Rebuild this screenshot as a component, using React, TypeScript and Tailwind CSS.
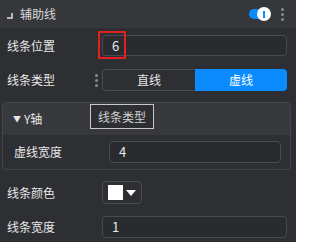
import React from "react";

const font = { fontFamily: '"Noto Sans CJK SC", "Noto Sans", sans-serif' };

function Dots() {
  return (
    <div className="flex flex-col items-center gap-[2px]">
      <span className="h-[3px] w-[3px] rounded-full bg-[#8a8b90]" />
      <span className="h-[3px] w-[3px] rounded-full bg-[#8a8b90]" />
      <span className="h-[3px] w-[3px] rounded-full bg-[#8a8b90]" />
    </div>
  );
}

export default function App() {
  return (
    <div
      className="w-[296px] h-[242px] overflow-hidden bg-[#2e2f33] text-[12px] text-[#e8e8e8]"
      style={font}
    >
      {/* header */}
      <div className="flex h-[28px] items-center bg-[#36373b] pl-[7px] pr-[12px]">
        <span className="mr-[7px] mt-[4px] h-[6px] w-[6px] border-b-2 border-r-2 border-[#b8b8b8]" />
        <span className="text-[#d8d8d8]">辅助线</span>
        <div className="ml-auto flex items-center gap-[12px]">
          <div className="relative h-[10px] w-[20px] rounded-full bg-[#0a8cff]">
            <div className="absolute right-[-2px] top-[-2px] flex h-[14px] w-[14px] items-center justify-center rounded-full bg-white">
              <span className="h-[7px] w-[2px] bg-[#0a8cff]" />
            </div>
          </div>
          <Dots />
        </div>
      </div>

      <div className="flex flex-col pl-[7px] pr-[9px]">
        {/* 线条位置 */}
        <div className="mt-[7px] flex h-[21px] items-center">
          <span className="w-[95px]">线条位置</span>
          <div className="relative flex h-[21px] flex-1 items-center rounded-[4px] border border-[#4a4b50] bg-[#2a2b2f] pl-[9px] text-[13px]">
            6
            <div className="absolute left-[-5px] top-[-5px] h-[28px] w-[28px] border-2 border-[#e3201e]" />
          </div>
        </div>

        {/* 线条类型 */}
        <div className="mt-[13px] flex h-[22px] items-center">
          <span className="w-[84px]">线条类型</span>
          <div className="w-[11px]">
            <Dots />
          </div>
          <div className="flex h-[22px] flex-1">
            <div className="flex flex-1 items-center justify-center rounded-l-[4px] border border-r-0 border-[#4a4b50]">
              直线
            </div>
            <div className="flex flex-1 items-center justify-center rounded-r-[4px] bg-[#0a8cff] text-white">
              虚线
            </div>
          </div>
        </div>
      </div>

      {/* Y轴 group */}
      <div className="mx-[2px] mr-[5px] mt-[11px] overflow-hidden rounded-[4px] border border-[#45464b]">
        <div className="relative flex h-[32px] items-center bg-[#38393d] pl-[10px]">
          <span className="mr-[3px] text-[8px] leading-none">▼</span>
          <span>Y轴</span>
          <div className="absolute left-[87px] top-[1px] flex h-[25px] w-[64px] items-center justify-center border border-[#c8c8c8] bg-[#2e2f33] text-[#d0d0d0]">
            线条类型
          </div>
        </div>
        <div className="flex h-[34px] items-center pl-[11px] pr-[9px]">
          <span className="w-[95px]">虚线宽度</span>
          <div className="flex h-[22px] flex-1 items-center rounded-[4px] border border-[#4a4b50] bg-[#2a2b2f] pl-[9px] text-[13px]">
            4
          </div>
        </div>
      </div>

      <div className="flex flex-col pl-[7px] pr-[9px]">
        {/* 线条颜色 */}
        <div className="mt-[11px] flex h-[23px] items-center">
          <span className="w-[95px]">线条颜色</span>
          <div className="flex h-[23px] w-[40px] items-center gap-[3px] rounded-[4px] border border-[#4a4b50] pl-[5px]">
            <span className="h-[15px] w-[15px] bg-white" />
            <svg width="10" height="6" viewBox="0 0 10 6">
              <path d="M0 0h10L5 6z" fill="#ffffff" />
            </svg>
          </div>
        </div>

        {/* 线条宽度 */}
        <div className="mt-[12px] flex h-[22px] items-center">
          <span className="w-[95px]">线条宽度</span>
          <div className="flex h-[22px] flex-1 items-center rounded-[4px] border border-[#4a4b50] bg-[#2a2b2f] pl-[9px] text-[13px]">
            1
          </div>
        </div>
      </div>
    </div>
  );
}
